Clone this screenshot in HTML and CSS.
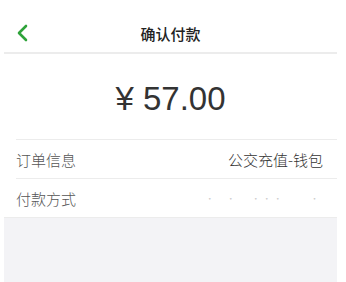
FILE: index.html
```html
<!DOCTYPE html>
<html lang="zh-CN">
<head>
    <meta charset="UTF-8">
    <meta name="viewport" content="width=device-width, initial-scale=1.0">
    <title>确认付款</title>
    <link rel="stylesheet" href="styles.css">
</head>
<body>
    <div id="page">
        <div id="header">
            <a href="" class="back">
                <svg width="12" height="18" viewBox="0 0 12 18">
                    <path d="M10 2 L3 9 L10 16" fill="none" stroke="#2fa33a" stroke-width="2.6" stroke-linecap="round" stroke-linejoin="round"/>
                </svg>
            </a>
            <div class="title">确认付款</div>
        </div>
        <div id="amount">¥ 57.00</div>
        <div class="list">
            <div class="row">
                <span class="label">订单信息</span>
                <span class="value">公交充值-钱包</span>
            </div>
            <div class="row">
                <span class="label">付款方式</span>
                <span class="value faint">·&nbsp;&nbsp;&nbsp;&nbsp;&nbsp;&nbsp;·&nbsp;&nbsp;&nbsp;&nbsp;&nbsp;&nbsp;&nbsp;&nbsp;·&nbsp;·&nbsp;·&nbsp;&nbsp;&nbsp;&nbsp;&nbsp;&nbsp;&nbsp;&nbsp;&nbsp;&nbsp;&nbsp;&nbsp;&nbsp;&nbsp;·</span>
            </div>
        </div>
        <div id="filler"></div>
    </div>
</body>
</html>
```

FILE: styles.css
```css
:root{
    --line-color: #ececec;
    --text-dark: #333;
    --text-gray: #555;
}
html,body {
    margin: 0;
    padding: 0;
    background-color: #fff;
    font-family: "Liberation Sans", "Noto Sans CJK SC", sans-serif;
}

/* page column, leaves a white strip on the right */
#page{
    margin-left: 4px;
    width: 333px;
    height: 282px;
    display: flex;
    flex-direction: column;
}

/* ============
    Header
    ============ */
#header{
    position: relative;
    height: 38px;
    margin-top: 14px;
    border-bottom: 2px solid var(--line-color);
    display: flex;
    justify-content: center;
    align-items: center;
}
#header .back{
    position: absolute;
    left: 12px;
    top: 10px;
    display: flex;
}
#header .title{
    font-family: "Noto Sans CJK SC", sans-serif;
    font-size: 15px;
    font-weight: 500;
    color: #222;
}

/* ============
    Amount
    ============ */
#amount{
    height: 85px;
    line-height: 90px;
    text-align: center;
    font-size: 33px;
    color: var(--text-dark);
    border-bottom: 1px solid var(--line-color);
    margin-left: 12px;
    padding-right: 12px;
}

/* ============
    Info rows
    ============ */
.list{
    padding-left: 12px;
}
.row{
    height: 38px;
    display: flex;
    justify-content: space-between;
    align-items: center;
    border-bottom: 1px solid var(--line-color);
    padding-right: 14px;
    font-family: "Noto Sans CJK SC", sans-serif;
    font-size: 15px;
    font-weight: 300;
}
.row:last-child{
    border-bottom: none;
}
.row .label{
    color: var(--text-gray);
}
.row .value{
    color: #333;
}
.row .faint{
    color: #ccc;
    font-size: 9px;
    margin-right: 4px;
}

#filler{
    flex: 1;
    background-color: #f3f3f6;
    border-top: 1px solid var(--line-color);
}
```
